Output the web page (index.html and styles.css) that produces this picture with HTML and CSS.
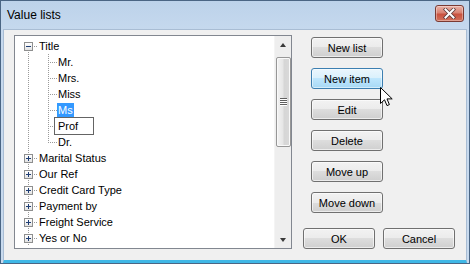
FILE: index.html
```html
<!DOCTYPE html>
<html lang="en">
<head>
  <meta charset="UTF-8">
  <title>Value lists</title>
  <link rel="stylesheet" href="styles.css">
</head>
<body>
  <div class="window">
    <div class="titlebar">
      <span class="title">Value lists</span>
      <button class="close">
        <svg width="13" height="11" viewBox="0 0 13 11">
          <path d="M2.5 1.5l8 8M10.5 1.5l-8 8" stroke="#5a3b3b" stroke-width="3.6" stroke-linecap="square"/>
          <path d="M2.5 1.5l8 8M10.5 1.5l-8 8" stroke="#ffffff" stroke-width="2" stroke-linecap="square"/>
        </svg>
      </button>
    </div>

    <div class="client">
      <div class="tree">
        <div class="items">
          <div class="row"><span class="cell first"><span class="exp"></span></span><span class="label">Title</span></div>
          <div class="row"><span class="cell pass"></span><span class="cell tee"></span><span class="label">Mr.</span></div>
          <div class="row"><span class="cell pass"></span><span class="cell tee"></span><span class="label">Mrs.</span></div>
          <div class="row"><span class="cell pass"></span><span class="cell tee"></span><span class="label">Miss</span></div>
          <div class="row"><span class="cell pass"></span><span class="cell tee"></span><span class="label sel">Ms</span></div>
          <div class="row"><span class="cell pass"></span><span class="cell tee"></span><span class="edit">Prof</span></div>
          <div class="row"><span class="cell pass"></span><span class="cell ell"></span><span class="label">Dr.</span></div>
          <div class="row"><span class="cell mid"><span class="exp plus"></span></span><span class="label">Marital Status</span></div>
          <div class="row"><span class="cell mid"><span class="exp plus"></span></span><span class="label">Our Ref</span></div>
          <div class="row"><span class="cell mid"><span class="exp plus"></span></span><span class="label">Credit Card Type</span></div>
          <div class="row"><span class="cell mid"><span class="exp plus"></span></span><span class="label">Payment by</span></div>
          <div class="row"><span class="cell mid"><span class="exp plus"></span></span><span class="label">Freight Service</span></div>
          <div class="row"><span class="cell mid"><span class="exp plus"></span></span><span class="label">Yes or No</span></div>
        </div>
        <div class="vscroll">
          <div class="sb-btn"><span class="arrow up"></span></div>
          <div class="thumb"><span class="grip"></span></div>
          <div class="track"></div>
          <div class="sb-btn"><span class="arrow down"></span></div>
        </div>
      </div>

      <div class="side">
        <div class="actions">
          <button class="btn">New list</button>
          <button class="btn hot">New item</button>
          <button class="btn">Edit</button>
          <button class="btn">Delete</button>
          <button class="btn">Move up</button>
          <button class="btn">Move down</button>
        </div>
        <div class="footer">
          <button class="btn">OK</button>
          <button class="btn">Cancel</button>
        </div>
      </div>
    </div>

    <!-- mouse pointer over "New item" -->
    <svg class="cursor" width="13" height="20" viewBox="0 0 13 20">
      <path d="M0.5 0.5V16.5L4.5 12.8L7 18.6L9.4 17.6L7 11.9H12.2Z" fill="#fff" stroke="#000" stroke-linejoin="round"/>
    </svg>
  </div>
</body>
</html>
```

FILE: styles.css
```css
* {
  margin: 0;
  padding: 0;
  box-sizing: border-box;
}

body {
  width: 470px;
  height: 264px;
  overflow: hidden;
  background: #ffffff;
  font-family: "Liberation Sans", Arial, sans-serif;
  font-size: 11px;
  color: #000;
}

button {
  font-family: inherit;
  font-size: 11px;
  color: #000;
}

.window {
  position: relative;
  width: 470px;
  height: 264px;
  display: flex;
  flex-direction: column;
  border: 1px solid #4a6584;
  background: linear-gradient(#bcd2ea, #c6d9ee 30px, #c8daee);
}

/* Title bar */
.titlebar {
  height: 28px;
  display: flex;
  align-items: flex-start;
  justify-content: space-between;
  padding-left: 6px;
}

.title {
  font-size: 12px;
  line-height: 14px;
  margin-top: 7px;
  color: #000;
}

.close {
  width: 29px;
  height: 17px;
  margin: 4px 5px 0 0;
  border: 1px solid #7a3a33;
  border-radius: 3px;
  background: linear-gradient(#eab1a6, #d98373 45%, #c9523f 55%, #d2725d);
  box-shadow: inset 0 0 0 1px rgba(255, 255, 255, 0.35);
  display: flex;
  align-items: center;
  justify-content: center;
}

/* Client area */
.client {
  flex: 1;
  margin: 0 2px;
  border: 1px solid #a9bdd4;
  border-bottom: 3px solid #3fb7e6;
  background: #f0f0f0;
  display: flex;
  padding: 5px 11px 11px 10px;
}

/* Tree view */
.tree {
  width: 278px;
  height: 214px;
  flex: none;
  display: flex;
  border: 1px solid #828790;
  background: #ffffff;
}

.items {
  flex: 1;
  padding: 2px 0 0 4px;
  overflow: hidden;
}

.row {
  display: flex;
  align-items: center;
  height: 16px;
}

.cell {
  width: 19px;
  height: 16px;
  flex: none;
  display: flex;
  justify-content: center;
  align-items: flex-start;
  padding-top: 4px;
}

.cell.first {
  background:
    repeating-linear-gradient(to bottom, #9a9a9a 0 1px, transparent 1px 2px) 9px 8px / 1px 8px no-repeat,
    repeating-linear-gradient(to right, #9a9a9a 0 1px, transparent 1px 2px) 9px 8px / 10px 1px no-repeat;
}

.cell.mid {
  background:
    repeating-linear-gradient(to bottom, #9a9a9a 0 1px, transparent 1px 2px) 9px 0 / 1px 16px no-repeat,
    repeating-linear-gradient(to right, #9a9a9a 0 1px, transparent 1px 2px) 9px 8px / 10px 1px no-repeat;
}

.cell.pass {
  background: repeating-linear-gradient(to bottom, #9a9a9a 0 1px, transparent 1px 2px) 9px 0 / 1px 16px no-repeat;
}

.cell.tee {
  background:
    repeating-linear-gradient(to bottom, #9a9a9a 0 1px, transparent 1px 2px) 10px 0 / 1px 16px no-repeat,
    repeating-linear-gradient(to right, #9a9a9a 0 1px, transparent 1px 2px) 10px 8px / 9px 1px no-repeat;
}

.cell.ell {
  background:
    repeating-linear-gradient(to bottom, #9a9a9a 0 1px, transparent 1px 2px) 10px 0 / 1px 9px no-repeat,
    repeating-linear-gradient(to right, #9a9a9a 0 1px, transparent 1px 2px) 10px 8px / 9px 1px no-repeat;
}

/* expander box */
.exp {
  width: 9px;
  height: 9px;
  border: 1px solid #8e8f8f;
  background: linear-gradient(#ffffff, #e3e3e3);
  display: grid;
  place-items: center;
}

.exp::before,
.exp::after {
  content: "";
  grid-area: 1 / 1;
  background: #1f3e74;
}

.exp::before {
  width: 5px;
  height: 1px;
}

.exp.plus::after {
  width: 1px;
  height: 5px;
}

.label {
  padding: 0 1px;
  line-height: 14px;
  white-space: nowrap;
}

.label.sel {
  background: #3399ff;
  color: #ffffff;
}

.edit {
  margin-left: -3px;
  width: 40px;
  height: 18px;
  flex: none;
  border: 1px solid #646464;
  background: #ffffff;
  padding-left: 3px;
  line-height: 16px;
}

/* scrollbar */
.vscroll {
  width: 17px;
  flex: none;
  display: flex;
  flex-direction: column;
  background: #eeeeee;
  border-left: 1px solid #f4f4f4;
}

.sb-btn {
  height: 17px;
  display: flex;
  align-items: center;
  justify-content: center;
}

.arrow {
  width: 0;
  height: 0;
  border-left: 3.5px solid transparent;
  border-right: 3.5px solid transparent;
}

.arrow.up {
  border-bottom: 4px solid #3a3a3a;
}

.arrow.down {
  border-top: 4px solid #3a3a3a;
}

.thumb {
  margin: 4px 0 0 1px;
  width: 15px;
  height: 90px;
  border: 1px solid #979797;
  border-radius: 2px;
  background: linear-gradient(to right, #f3f3f3, #e6e6e6 45%, #d6d6d6 55%, #d9d9d9);
  box-shadow: inset 0 0 0 1px #f9f9f9;
  display: flex;
  align-items: center;
  justify-content: center;
}

.grip {
  width: 7px;
  height: 8px;
  background: repeating-linear-gradient(#606060 0 1px, #ffffff 1px 2px);
}

.track {
  flex: 1;
}

/* buttons column */
.side {
  flex: 1;
  display: flex;
  flex-direction: column;
  justify-content: space-between;
}

.actions {
  display: flex;
  flex-direction: column;
  gap: 10px;
  padding: 2px 0 0 19px;
}

.footer {
  display: flex;
  justify-content: flex-end;
  gap: 8px;
}

.btn {
  width: 72px;
  height: 21px;
  border: 1px solid #707070;
  border-radius: 3px;
  background: linear-gradient(#f2f2f2, #ebebeb 50%, #dddddd 50%, #cfcfcf);
  box-shadow: inset 0 0 0 1px rgba(255, 255, 255, 0.6);
}

.btn.hot {
  border-color: #3c7fb1;
  background: linear-gradient(#eaf6fd, #d9f0fc 50%, #bee6fd 50%, #a7d9f5);
  box-shadow: inset 0 0 0 1px rgba(255, 255, 255, 0.5);
}

.cursor {
  position: absolute;
  left: 379px;
  top: 86px;
}
```
